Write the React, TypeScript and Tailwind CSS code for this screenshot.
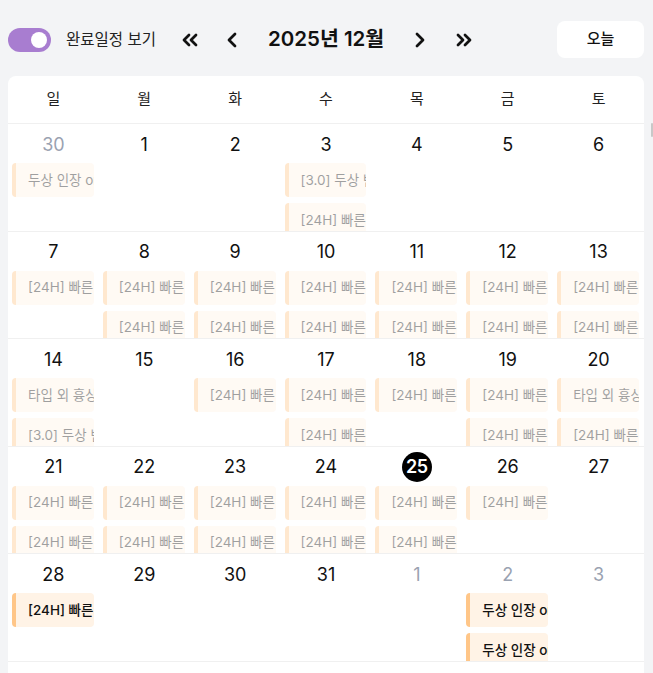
import { ChevronLeft, ChevronRight, ChevronsLeft, ChevronsRight } from 'lucide-react';

type CalEvent = { title: string; done: boolean } | null;

interface DayCell {
  day: number;
  outside?: boolean;
  today?: boolean;
  events: CalEvent[];
}

const WEEKDAYS = ['일', '월', '화', '수', '목', '금', '토'];

const fast = (done = true): CalEvent => ({ title: '[24H] 빠른 그리기 신청', done });
const bust = (done = true): CalEvent => ({ title: '두상 인장 one-shot 일러스트', done });
const v3 = (): CalEvent => ({ title: '[3.0] 두상 반신 일러스트', done: true });
const type = (): CalEvent => ({ title: '타입 외 흉상 일러스트', done: true });

const WEEKS: DayCell[][] = [
  [
    { day: 30, outside: true, events: [bust()] },
    { day: 1, events: [] },
    { day: 2, events: [] },
    { day: 3, events: [v3(), fast()] },
    { day: 4, events: [] },
    { day: 5, events: [] },
    { day: 6, events: [] },
  ],
  [
    { day: 7, events: [fast()] },
    { day: 8, events: [fast(), fast()] },
    { day: 9, events: [fast(), fast()] },
    { day: 10, events: [fast(), fast()] },
    { day: 11, events: [fast(), fast()] },
    { day: 12, events: [fast(), fast()] },
    { day: 13, events: [fast(), fast()] },
  ],
  [
    { day: 14, events: [type(), v3()] },
    { day: 15, events: [] },
    { day: 16, events: [fast()] },
    { day: 17, events: [fast(), fast()] },
    { day: 18, events: [fast()] },
    { day: 19, events: [fast(), fast()] },
    { day: 20, events: [type(), fast()] },
  ],
  [
    { day: 21, events: [fast(), fast()] },
    { day: 22, events: [fast(), fast()] },
    { day: 23, events: [fast(), fast()] },
    { day: 24, events: [fast(), fast()] },
    { day: 25, today: true, events: [fast(), fast()] },
    { day: 26, events: [fast()] },
    { day: 27, events: [] },
  ],
  [
    { day: 28, events: [fast(false)] },
    { day: 29, events: [] },
    { day: 30, events: [] },
    { day: 31, events: [] },
    { day: 1, outside: true, events: [] },
    { day: 2, outside: true, events: [bust(false), bust(false)] },
    { day: 3, outside: true, events: [] },
  ],
];

function EventChip({ event }: { event: CalEvent }) {
  if (!event) return <div className="h-[34px]" />;
  return (
    <div
      className={`ml-1 mr-[5px] h-[34px] shrink-0 flex items-center rounded-[4px] border-l-4 border-[#ffc688] bg-[#fff3e6] pl-3 overflow-hidden whitespace-nowrap text-[13.5px] text-[#111] ${
        event.done ? 'opacity-40' : 'font-medium'
      }`}
    >
      {event.title}
    </div>
  );
}

function Cell({ cell }: { cell: DayCell }) {
  return (
    <div className="min-w-0 overflow-hidden">
      <div className="pt-[5px] h-[35px] flex justify-center">
        {cell.today ? (
          <span className="w-[30px] h-[30px] rounded-full bg-black text-white text-[18px] font-semibold flex items-center justify-center tracking-tight">
            {cell.day}
          </span>
        ) : (
          <span
            className={`h-[30px] flex items-center text-[18px] ${
              cell.outside ? 'text-[#9aa2b1]' : 'text-[#111]'
            }`}
          >
            {cell.day}
          </span>
        )}
      </div>
      <div className="mt-1 flex flex-col gap-[6px]">
        {cell.events.map((ev, i) => (
          <EventChip key={i} event={ev} />
        ))}
      </div>
    </div>
  );
}

export default function App() {
  return (
    <div
      className="relative h-[673px] overflow-hidden bg-[#f3f4f6]"
      style={{ fontFamily: '"Inter", "Noto Sans CJK KR", sans-serif' }}
    >
      {/* top bar */}
      <div className="flex items-center h-[37px] mt-[21px] mb-[18px] pl-2 pr-[9px]">
        <button className="relative w-[43px] h-[24px] rounded-full bg-[#a87dd0]">
          <span className="absolute right-[4px] top-[4px] w-4 h-4 rounded-full bg-white" />
        </button>
        <span className="ml-[15px] text-[15.5px] text-[#222]">완료일정 보기</span>

        <button className="ml-[22px] w-6 h-6 flex items-center justify-center text-[#111]">
          <ChevronsLeft size={24} strokeWidth={2.75} />
        </button>
        <button className="ml-[18px] w-6 h-6 flex items-center justify-center text-[#111]">
          <ChevronLeft size={24} strokeWidth={2.75} />
        </button>
        <h1 className="ml-6 text-[20.5px] font-semibold text-[#111]">2025년 12월</h1>
        <button className="ml-6 w-6 h-6 flex items-center justify-center text-[#111]">
          <ChevronRight size={24} strokeWidth={2.75} />
        </button>
        <button className="ml-5 w-6 h-6 flex items-center justify-center text-[#111]">
          <ChevronsRight size={24} strokeWidth={2.75} />
        </button>

        <button className="ml-auto w-[87px] h-[37px] rounded-lg bg-white text-[15px] font-medium text-[#111]">
          오늘
        </button>
      </div>

      {/* calendar */}
      <div className="mx-2 w-[636px] bg-white rounded-t-lg">
        <div className="grid grid-cols-7 h-[47px] items-center">
          {WEEKDAYS.map((w) => (
            <div key={w} className="text-center text-[15px] text-[#222]">
              {w}
            </div>
          ))}
        </div>
        {WEEKS.map((week, wi) => (
          <div
            key={wi}
            className="grid grid-cols-7 h-[107.5px] overflow-hidden border-t border-[#f0f0f0]"
          >
            {week.map((cell, ci) => (
              <Cell key={ci} cell={cell} />
            ))}
          </div>
        ))}
        <div className="border-t border-[#f0f0f0] h-12" />
      </div>

      <div className="absolute right-0 top-[123px] w-[2px] h-[14px] rounded-full bg-[#c8c8c8]" />
    </div>
  );
}
